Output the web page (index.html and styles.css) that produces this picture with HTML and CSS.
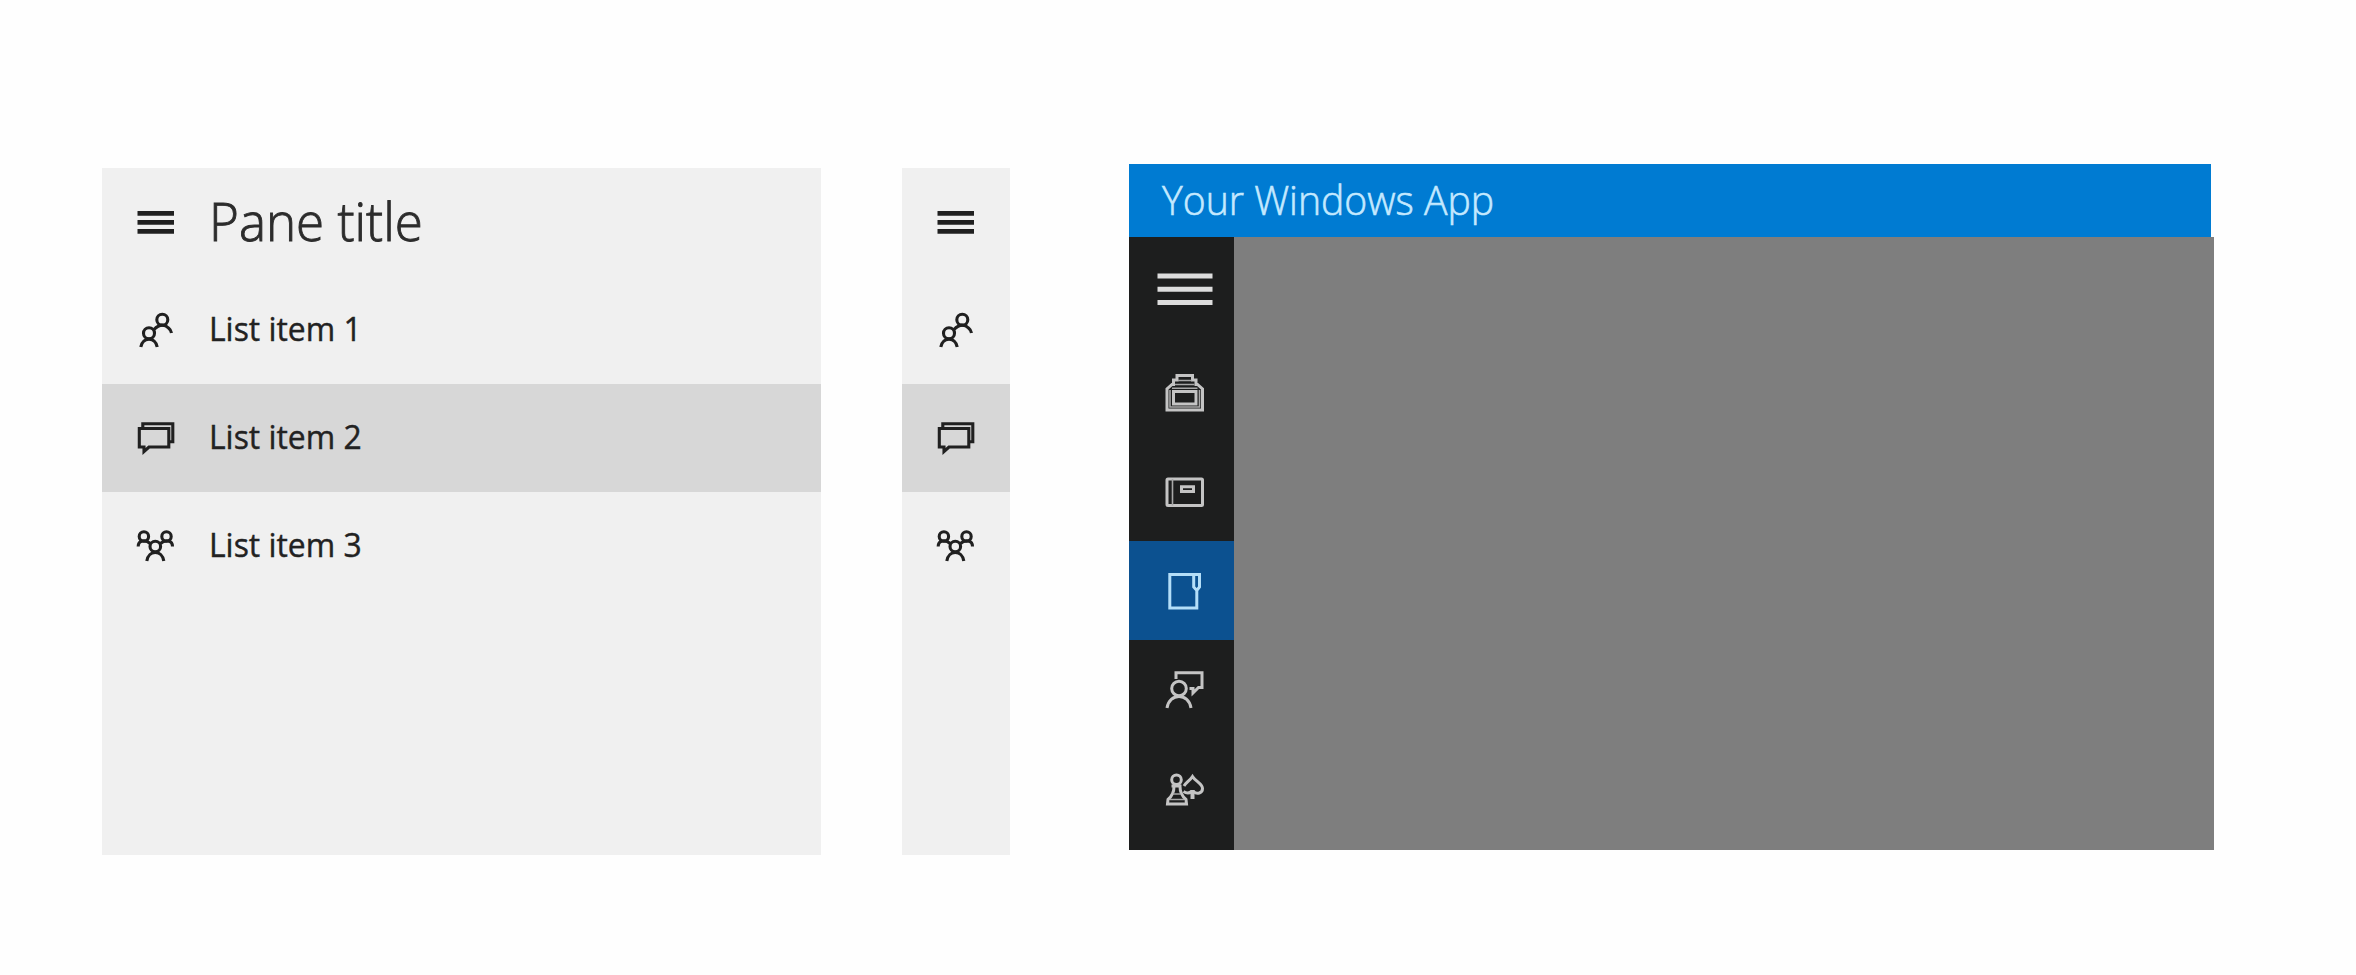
FILE: index.html
```html
<!DOCTYPE html>
<html lang="en">
<head>
<meta charset="utf-8">
<title>Navigation pane</title>
<link rel="stylesheet" href="styles.css">
</head>
<body>
<svg class="defs" width="0" height="0">
  <symbol id="menu" viewBox="0 0 40 40"><path stroke-width="4.8" d="M1.500 11.300h36.500M1.500 20.300h36.500M1.500 29.300h36.500"/></symbol>
  <symbol id="people" viewBox="0 0 40 40"><circle cx="26.300" cy="9.700" r="5.500"/><path d="M18 19.500q8-8 14.500-1.500q2.500 2 3 5"/><circle cx="13" cy="23.300" r="5.500"/><path d="M4.800 37C6.500 26.500 19.500 26.500 21.200 37"/></symbol>
  <symbol id="chat" viewBox="0 0 40 40"><path d="M3.300 10.500h29.500V29H13l-5 4.500v-4.500H3.300zM6.800 10V5.800h30v18h-4"/></symbol>
  <symbol id="group" viewBox="0 0 40 40"><circle cx="7.900" cy="10.500" r="4.700"/><circle cx="30.500" cy="10.500" r="4.700"/><path d="M2.200 20.500c0-6 7-7.500 12-3M36.500 20.500c0-6-7-7.500-12-3"/><circle cx="19.300" cy="20.500" r="5.300"/><path d="M10.800 35C12.500 23.500 26.100 23.500 27.800 35"/></symbol>
</svg>
<main class="stage">
  <nav class="pane">
    <div class="row"><svg class="icon"><use href="#menu"/></svg><h1 class="title">Pane title</h1></div>
    <div class="row"><svg class="icon"><use href="#people"/></svg><span class="label">List item 1</span></div>
    <div class="row selected"><svg class="icon"><use href="#chat"/></svg><span class="label">List item 2</span></div>
    <div class="row"><svg class="icon"><use href="#group"/></svg><span class="label">List item 3</span></div>
  </nav>
  <nav class="pane compact">
    <div class="row"><svg class="icon"><use href="#menu"/></svg></div>
    <div class="row"><svg class="icon"><use href="#people"/></svg></div>
    <div class="row selected"><svg class="icon"><use href="#chat"/></svg></div>
    <div class="row"><svg class="icon"><use href="#group"/></svg></div>
  </nav>
  <section class="app">
    <header class="bar"><span class="app-name">Your Windows App</span></header>
    <div class="body">
      <nav class="rail">
        <div class="cell first"><svg class="burger" viewBox="0 0 56 40"><path d="M.5 6h55M.5 19.300h55M.5 32.600h55"/></svg></div>
        <div class="cell"><svg class="glyph" viewBox="0 0 40 40"><path d="M2 37V16l5-4.500h1.500V7H12V2.500h15.500V7H31v4.500h1.500l5 4.500v21z"/><path class="fine" d="M13 7.500h13.500M10 11.500h19.500M7 15.300h25.500M5 17v17h29.500V17"/><path d="M8.500 18.500h22.500v12.500h-22.500z"/></svg></div>
        <div class="cell"><svg class="glyph" viewBox="0 0 40 40"><path d="M3 7h33.500q1 0 1 1v24.500q0 1-1 1H3q-1 0-1-1V8q0-1 1-1z"/><path class="fine" d="M7.500 7v26.500"/><path d="M16.500 14.800h12v4.700h-12z"/></svg></div>
        <div class="cell current"><svg class="glyph" viewBox="0 0 40 40"><path d="M31.800 20v17h-27V3.500H34.500V16l-2.700 3.500L28.700 16V3.500"/></svg></div>
        <div class="cell"><svg class="glyph" viewBox="0 0 40 40"><circle cx="14" cy="18.500" r="7.300"/><path d="M2 38C4 22.500 24 22.500 26 38M11 9V2.700h26v14.800h-3.500L28 23v-4.500h-3.500"/></svg></div>
        <div class="cell"><svg class="glyph" viewBox="0 0 40 40"><circle cx="11.500" cy="10.800" r="4.800"/><path d="M6.500 17h10M9 17.500q0 8-6 13l-.500 4.500h19l-.500-4.500q-6-5-6-13"/><path class="fine" d="M8 25h7.500M5 30.500h14"/><path d="M19 17c2-3.500 6-5.500 8.500-9.500c3 5 10 7 10 12c0 4.500-5.500 6.500-9 3h-2q-3.500 3-8 0"/><path stroke-width="4" d="M27.500 21v9"/></svg></div>
      </nav>
    </div>
  </section>
</main>
</body>
</html>
```

FILE: styles.css
```css
* { box-sizing: border-box; }
body { margin: 0; background: #fefefe; font-family: "Open Sans", "Noto Sans", sans-serif; }
.defs { display: block; }
.stage { display: flex; height: 975px; padding: 164px 0 0 102px; }
.pane { width: 719px; height: 687px; margin-top: 4px; background: #f0f0f0; color: #222; }
.compact { width: 108px; margin-left: 81px; }
.row { display: flex; align-items: center; height: 108px; padding-left: 34px; }
.selected { background: #d7d7d7; }
.icon { flex: none; width: 40px; height: 40px; fill: none; stroke: #202020; stroke-width: 3.1; }
.title, .label, .app-name { display: block; margin: 0; white-space: nowrap; transform-origin: left center; }
.title { margin-left: 33px; padding-bottom: 3px; font-size: 53px; font-weight: 300; line-height: 72px; color: #2c2c2c; -webkit-text-stroke: .9px #2c2c2c; transform: scaleX(.964); }
.label { margin-left: 33px; padding-bottom: 2px; font-size: 33px; line-height: 46px; -webkit-text-stroke: .4px #222; transform: scaleX(.965); }
.app { width: 1085px; margin-left: 119px; }
.bar { display: flex; align-items: center; width: 1082px; height: 73px; padding-left: 33px; background: #007bd2; color: #c4e9ff; }
.app-name { padding-bottom: 4px; font-size: 41px; font-weight: 300; line-height: 56px; -webkit-text-stroke: .6px #c4e9ff; transform: scaleX(.955); }
.body { display: flex; height: 613px; background: #7e7e7e; }
.rail { width: 105px; background: #1d1e1e; }
.cell { display: flex; align-items: center; justify-content: center; height: 99px; padding-left: 6px; }
.first { height: 106px; }
.current { background: #0c5190; }
.burger { width: 56px; height: 40px; fill: none; stroke: #ddd; stroke-width: 5; }
.glyph { width: 40px; height: 40px; fill: none; stroke: #c4c4c4; stroke-width: 3; }
.current .glyph { stroke: #b4def8; }
.glyph .fine { stroke-width: 1.600; stroke: #a8a8a8; }
```
